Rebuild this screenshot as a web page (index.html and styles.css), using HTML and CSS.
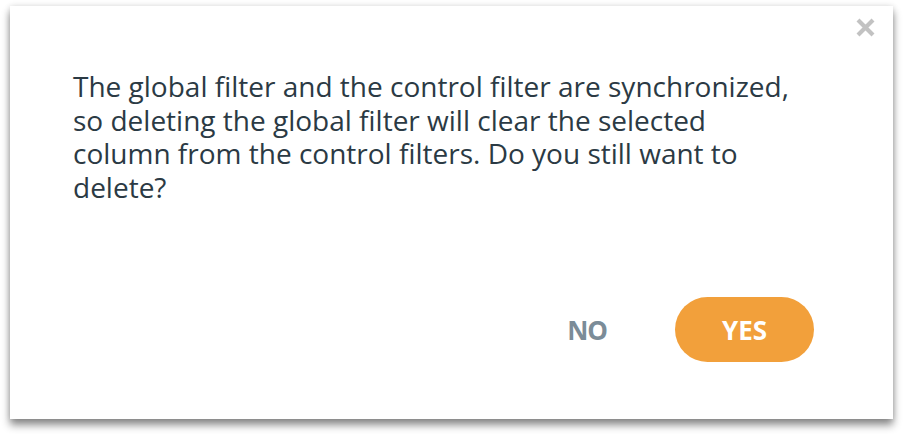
FILE: index.html
```html
<!DOCTYPE html>
<html>
<head>
<meta charset="utf-8">
<link rel="stylesheet" href="styles.css">
</head>
<body>
<div class="dialog">
  <div class="dialog-header">
    <button class="close" aria-label="Close">
      <svg width="19" height="19" viewBox="0 0 19 19"><path d="M2 2L17 17M17 2L2 17" stroke="#c2c2c2" stroke-width="4.2" stroke-linecap="butt"/></svg>
    </button>
  </div>
  <div class="dialog-body">
    <p class="message">The global filter and the control filter are synchronized, so deleting the global filter will clear the selected column from the control filters. Do you still want to delete?</p>
  </div>
  <div class="dialog-footer">
    <button class="btn btn-no">NO</button>
    <button class="btn btn-yes">YES</button>
  </div>
</div>
</body>
</html>
```

FILE: styles.css
```css
html, body {
  margin: 0;
  padding: 0;
  background: #ffffff;
}
body {
  padding: 6px 10px 20px 10px;
  font-family: "Open Sans", "Noto Sans", sans-serif;
}
.dialog {
  width: 883px;
  height: 413px;
  box-sizing: border-box;
  background: #fff;
  box-shadow: 0 6px 8px rgba(0,0,0,0.45), 0 0 6px rgba(0,0,0,0.12);
  display: flex;
  flex-direction: column;
}
.dialog-header {
  display: flex;
  justify-content: flex-end;
  padding: 12px 18px 0 0;
  height: 19px;
}
.close {
  border: none;
  background: none;
  padding: 0;
  width: 19px;
  height: 19px;
  cursor: pointer;
}
.close svg { display: block; }
.dialog-body {
  padding: 33px 63px 0 63px;
  flex: 1;
}
.message {
  margin: 0;
  font-size: 28px;
  line-height: 33.5px;
  color: #2b3a44;
  width: 726px;
}
.dialog-footer {
  display: flex;
  justify-content: flex-end;
  align-items: center;
  gap: 68px;
  padding: 0 79px 57px 0;
}
.btn {
  border: none;
  font-family: "Open Sans", sans-serif;
  font-weight: 700;
  font-size: 26px;
  cursor: pointer;
}
.btn-no {
  background: none;
  color: #7b8c98;
  padding: 0;
  letter-spacing: -1px;
}
.btn-yes {
  background: #f2a03b;
  color: #fff;
  width: 139px;
  height: 65px;
  border-radius: 33px;
  padding: 0;
}
```
